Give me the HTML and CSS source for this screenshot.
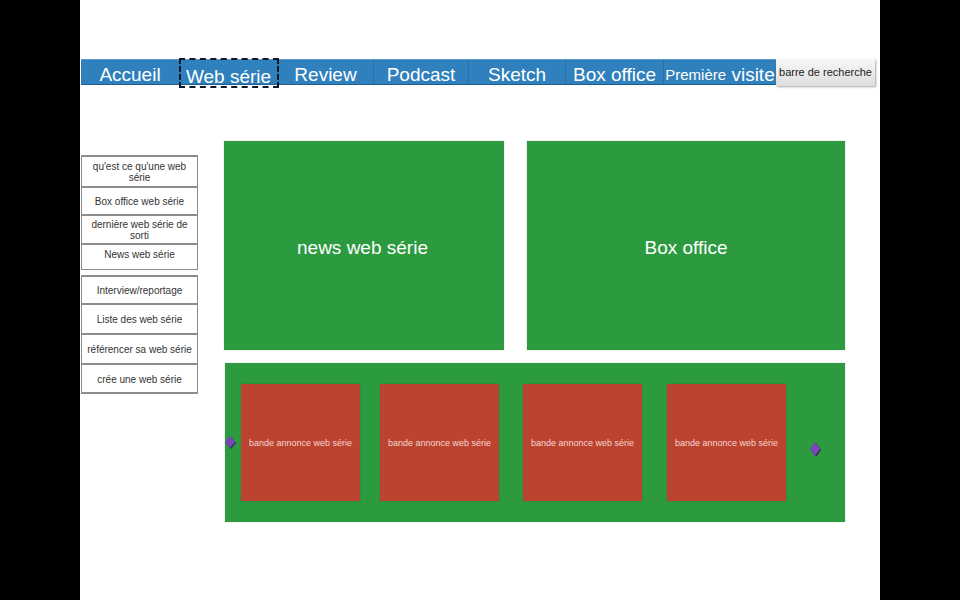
FILE: index.html
```html
<!DOCTYPE html>
<html lang="fr">
<head>
<meta charset="utf-8">
<title>Web série</title>
<link rel="stylesheet" href="styles.css">
</head>
<body>
<div class="page">
  <header class="topbar">
    <nav class="nav">
      <a class="nav-item w99">Accueil</a>
      <a class="nav-item w98 active">Web série</a>
      <a class="nav-item w96">Review</a>
      <a class="nav-item w95">Podcast</a>
      <a class="nav-item w97">Sketch</a>
      <a class="nav-item w98">Box office</a>
      <a class="nav-item w112"><span class="small">Première</span>&nbsp;visite</a>
    </nav>
    <div class="search">barre de recherche</div>
  </header>
  <div class="main">
    <aside class="sidebar">
      <div class="side-item h31">qu'est ce qu'une web série</div>
      <div class="side-item h28">Box office web série</div>
      <div class="side-item h29">dernière web série de sorti</div>
      <div class="side-item h27 top">News web série</div>
      <div class="side-item h28 gap">Interview/reportage</div>
      <div class="side-item h30">Liste des web série</div>
      <div class="side-item h30">référencer sa web série</div>
      <div class="side-item h31">crée une web série</div>
    </aside>
    <section class="content">
      <div class="row">
        <div class="panel news">news web série</div>
        <div class="panel box">Box office</div>
      </div>
      <div class="carousel">
        <span class="arrow left"><svg width="14" height="14" viewBox="0 0 14 14"><path d="M7 1 L12 7 L7 13 L2 7 Z" fill="#3a2a66" transform="translate(1,1)"/><path d="M7 1 L12 7 L7 13 L2 7 Z" fill="#7a45b8"/></svg></span>
        <div class="card">bande annonce web série</div>
        <div class="card g20">bande annonce web série</div>
        <div class="card g24">bande annonce web série</div>
        <div class="card g25">bande annonce web série</div>
        <span class="arrow right"><svg width="14" height="16" viewBox="0 0 14 16"><path d="M7 1 L12 8 L7 15 L2 8 Z" fill="#2f2a55" transform="translate(1,1)"/><path d="M7 1 L12 8 L7 15 L2 8 Z" fill="#7a45b8"/></svg></span>
      </div>
    </section>
  </div>
</div>
</body>
</html>
```

FILE: styles.css
```css
html, body {
  margin: 0;
  padding: 0;
  background: #000;
  height: 100%;
}
body {
  font-family: "Liberation Sans", Arial, Helvetica, sans-serif;
}
.page {
  margin-left: 80px;
  width: 800px;
  height: 600px;
  background: #fff;
  padding-top: 59px;
  box-sizing: border-box;
}
.topbar {
  display: flex;
  align-items: flex-start;
  margin-left: 1px;
}
.nav {
  display: flex;
  height: 26px;
  background: #2f80bc;
  border-top: 1px solid #5a9bd0;
  border-bottom: 1px solid #1f5f90;
  box-sizing: border-box;
}
.nav-item {
  display: flex;
  align-items: center;
  justify-content: center;
  color: #fff;
  font-size: 19px;
  line-height: 1;
  padding-top: 4px;
  box-sizing: border-box;
  height: 100%;
  border-right: 1px solid #2a70a6;
  white-space: nowrap;
}
.nav-item .small { font-size: 15px; padding-top: 1px; }
.w99 { width: 99px; }
.w98 { width: 98px; }
.w96 { width: 96px; }
.w95 { width: 95px; }
.w97 { width: 97px; }
.w112 { width: 112px; border-right: none; }
.nav-item.active {
  outline: 2px dashed #0a1a2a;
  outline-offset: -1px;
  height: 28px;
  margin-top: -1px;
  padding-top: 7px;
  overflow: hidden;
}
.search {
  width: 99px;
  height: 27px;
  box-sizing: border-box;
  background: linear-gradient(#f7f7f7, #dedede);
  box-shadow: 1px 1px 2px rgba(0,0,0,0.35);
  font-size: 11px;
  color: #222;
  display: flex;
  align-items: center;
  justify-content: center;
  padding-bottom: 1px;
}
.main {
  display: flex;
  align-items: flex-start;
  margin-top: 55px;
}
.sidebar {
  margin-top: 14px;
  margin-left: 1px;
  width: 117px;
  display: flex;
  flex-direction: column;
}
.side-item {
  box-sizing: border-box;
  border: 1px solid #8c8c8c;
  border-top: 2px solid #8c8c8c;
  border-bottom: none;
  display: flex;
  align-items: center;
  justify-content: center;
  text-align: center;
  font-size: 10px;
  line-height: 11px;
  color: #333;
  padding: 1px 4px 0;
}
.side-item:last-child { border-bottom: 2px solid #8c8c8c; }
.side-item.top { align-items: flex-start; padding-top: 4px; border-bottom: 1px solid #8c8c8c; }
.side-item.gap { margin-top: 5px; }
.h27 { height: 27px; }
.h28 { height: 28px; }
.h29 { height: 29px; }
.h30 { height: 30px; }
.h31 { height: 31px; }
.content {
  margin-left: 26px;
  display: flex;
  flex-direction: column;
}
.row {
  display: flex;
  gap: 23px;
}
.panel {
  height: 209px;
  background: #2c9b40;
  color: #fff;
  font-size: 19px;
  display: flex;
  align-items: center;
  justify-content: center;
  box-shadow: 0 0 1px rgba(0,0,0,0.3);
}
.panel.news { width: 280px; padding-right: 3px; box-sizing: border-box; padding-top: 4px; }
.panel.box { width: 318px; padding-top: 4px; box-sizing: border-box; }
.carousel {
  position: relative;
  margin-top: 13px;
  margin-left: 1px;
  width: 620px;
  height: 159px;
  background: #2c9b40;
  box-shadow: 0 0 1px rgba(0,0,0,0.3);
  display: flex;
  align-items: flex-start;
  padding: 21px 0 0 16px;
  box-sizing: border-box;
}
.card {
  width: 119px;
  height: 117px;
  flex: none;
  background: #bd4331;
  color: #f3d6cf;
  font-size: 9px;
  display: flex;
  align-items: center;
  justify-content: center;
  white-space: nowrap;
  box-shadow: 0 0 1px rgba(0,0,0,0.3);
}
.g20 { margin-left: 20px; }
.g24 { margin-left: 24px; }
.g25 { margin-left: 25px; }
.arrow {
  position: absolute;
  display: block;
  line-height: 0;
}
.arrow.left { left: -2px; top: 72px; }
.arrow.right { left: 583px; top: 78px; }
```
